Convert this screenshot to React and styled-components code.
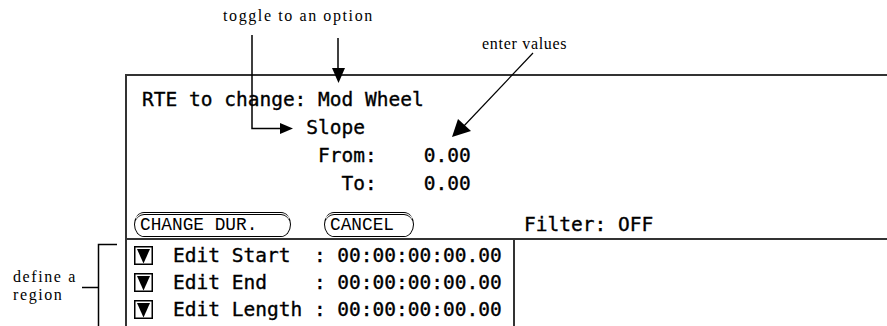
import React from "react";
import styled, { createGlobalStyle } from "styled-components";

const GlobalStyle = createGlobalStyle`
  html, body {
    margin: 0;
    padding: 0;
    background: #fff;
  }
`;

const mono = `"DejaVu Sans Mono", monospace`;
const serif = `"Liberation Serif", "Times New Roman", serif`;

const App = () => {
  const editRows = [
    ["Edit Start", "00:00:00:00.00"],
    ["Edit End", "00:00:00:00.00"],
    ["Edit Length", "00:00:00:00.00"],
  ];

  return (
    <Page>
      <GlobalStyle />
      <Header>
        <Note $top={7} $spacing={1.6}>toggle to an option</Note>
        <Note $top={35} $spacing={0.7}>enter values</Note>
      </Header>

      <Panel>
        <Line>RTE to change: Mod Wheel</Line>
        <Line $indent={14}>Slope</Line>
        <Field>
          <FieldLabel>From:</FieldLabel>
          <span />
          <span>0.00</span>
        </Field>
        <Field>
          <FieldLabel>To:</FieldLabel>
          <span />
          <span>0.00</span>
        </Field>
        <ButtonRow>
          <MacButton $width={157}>CHANGE DUR.</MacButton>
          <MacButton $width={90}>CANCEL</MacButton>
          <Status>Filter: OFF</Status>
        </ButtonRow>
      </Panel>

      <EditSection>
        <RegionNote>
          define a
          <br />
          region
        </RegionNote>
        <EditBox>
          {editRows.map(([label, value]) => (
            <EditRow key={label}>
              <DownBox />
              <EditText>
                <EditLabel>{label}</EditLabel>: {value}
              </EditText>
            </EditRow>
          ))}
        </EditBox>
      </EditSection>

      <Callouts width="887" height="326" viewBox="0 0 887 326">
        {/* toggle to an option -> Slope */}
        <polyline
          points="252,35 252,128.5 282,128.5"
          fill="none"
          stroke="#000"
          strokeWidth="1.5"
        />
        <polygon points="280,123 293,128.5 280,134" fill="#000" />
        {/* toggle to an option -> Mod Wheel */}
        <line x1="338" y1="38" x2="338" y2="70" stroke="#000" strokeWidth="1.5" />
        <polygon points="332,68 345,68 338.5,83" fill="#000" />
        {/* enter values */}
        <line x1="533" y1="53" x2="462" y2="128" stroke="#000" strokeWidth="1.2" />
        <polygon points="452,137 458,119 471,131" fill="#000" />
        {/* define a region bracket */}
        <polyline
          points="117,244.5 98.5,244.5 98.5,326"
          fill="none"
          stroke="#000"
          strokeWidth="1.5"
        />
        <line x1="82" y1="287.5" x2="98" y2="287.5" stroke="#000" strokeWidth="1.5" />
      </Callouts>
    </Page>
  );
};

const DownBox = () => (
  <svg width="19" height="19" viewBox="0 0 19 19">
    <rect x="0.75" y="0.75" width="17.5" height="17.5" fill="#fff" stroke="#000" strokeWidth="1.5" />
    <polygon points="3,3 16,3 9.5,17.5" fill="#000" />
  </svg>
);

const Page = styled.div`
  position: relative;
  width: 887px;
  height: 326px;
  overflow: hidden;
  background: #fff;
  color: #000;
`;

const Header = styled.div`
  display: grid;
  grid-template-columns: 259px auto;
  align-items: start;
  height: 74px;
  padding-left: 223px;
  box-sizing: border-box;
`;

const Note = styled.div`
  margin-top: ${(p) => p.$top}px;
  font-family: ${serif};
  font-size: 16px;
  letter-spacing: ${(p) => p.$spacing}px;
  line-height: 18px;
  white-space: nowrap;
`;

const Panel = styled.div`
  display: flex;
  flex-direction: column;
  height: 166px;
  box-sizing: border-box;
  margin-left: 125px;
  padding: 10px 0 0 15px;
  border-top: 2px solid #333;
  border-bottom: 2px solid #333;
  border-left: 2px solid #333;
  font-family: ${mono};
  font-size: 19.5px;
  -webkit-text-stroke: 0.35px #000;
`;

const Line = styled.div`
  height: 28px;
  line-height: 28px;
  padding-left: ${(p) => p.$indent || 0}ch;
  white-space: pre;
`;

const Field = styled.div`
  display: grid;
  grid-template-columns: 20ch 4ch auto;
  height: 28px;
  line-height: 28px;
`;

const FieldLabel = styled.span`
  text-align: right;
`;

const ButtonRow = styled.div`
  display: flex;
  align-items: center;
  margin-top: auto;
  margin-left: -8px;
  height: 28px;
`;

const MacButton = styled.button`
  width: ${(p) => p.$width}px;
  height: 25px;
  margin-right: 33px;
  padding: 0 0 0 5px;
  box-sizing: border-box;
  text-align: left;
  background: #fff;
  color: #000;
  border: 1.5px solid #000;
  border-top: 3px double #000;
  border-radius: 10px / 50%;
  font-family: "Liberation Mono", monospace;
  font-size: 17.8px;
  line-height: 20px;
  -webkit-text-stroke: 0;
  cursor: pointer;
`;

const Status = styled.span`
  margin-left: 77px;
  white-space: pre;
`;

const EditSection = styled.div`
  display: flex;
`;

const RegionNote = styled.div`
  width: 125px;
  box-sizing: border-box;
  padding: 28px 0 0 13px;
  font-family: ${serif};
  font-size: 16px;
  letter-spacing: 1.6px;
  line-height: 18px;
`;

const EditBox = styled.div`
  width: 390px;
  height: 100px;
  box-sizing: border-box;
  padding: 2px 0 0 7px;
  border-left: 2px solid #333;
  border-right: 2px solid #333;
  font-family: ${mono};
  font-size: 19.5px;
  -webkit-text-stroke: 0.35px #000;
`;

const EditRow = styled.div`
  display: flex;
  align-items: center;
  height: 27px;
  line-height: 27px;
`;

const EditText = styled.span`
  margin-left: 20px;
  white-space: pre;
`;

const EditLabel = styled.span`
  display: inline-block;
  width: 12ch;
`;

const Callouts = styled.svg`
  position: absolute;
  top: 0;
  left: 0;
  pointer-events: none;
`;

export default App;
